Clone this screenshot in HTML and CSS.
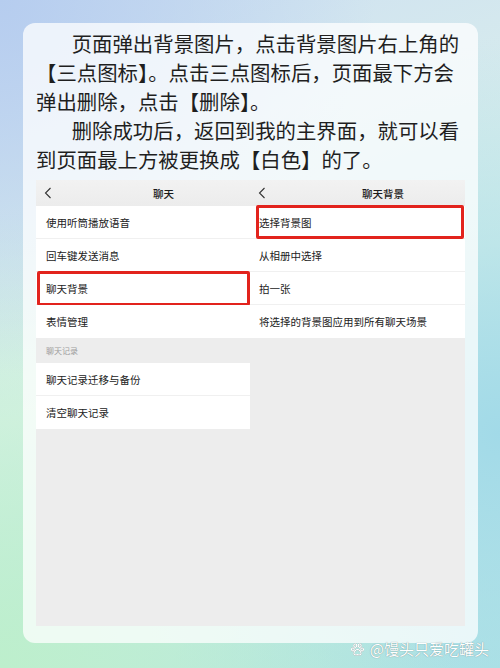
FILE: index.html
```html
<!DOCTYPE html>
<html lang="zh-CN">
<head>
  <meta charset="UTF-8" />
  <meta name="viewport" content="width=device-width, initial-scale=1" />
  <title>更换聊天背景</title>
  <link rel="stylesheet" href="styles.css">
</head>
<body>
  <div class="card">
    <div class="intro">
      <p>页面弹出背景图片，点击背景图片右上角的【三点图标】。点击三点图标后，页面最下方会弹出删除，点击【删除】。</p>
      <p>删除成功后，返回到我的主界面，就可以看到页面最上方被更换成【白色】的了。</p>
    </div>

    <div class="shot">
      <!-- left: chat settings -->
      <div class="panel left">
        <div class="nav">
          <svg class="back" width="8" height="12" viewBox="0 0 8 12"><path d="M6.5 1 1.5 6l5 5" fill="none" stroke="#333" stroke-width="1.1"/></svg>
          <span class="title">聊天</span>
        </div>
        <div class="row">使用听筒播放语音</div>
        <div class="row">回车键发送消息</div>
        <div class="row mark">聊天背景</div>
        <div class="row last">表情管理</div>
        <div class="group">聊天记录</div>
        <div class="row">聊天记录迁移与备份</div>
        <div class="row last">清空聊天记录</div>
      </div>

      <!-- right: chat background -->
      <div class="panel right">
        <div class="nav">
          <svg class="back" width="8" height="12" viewBox="0 0 8 12"><path d="M6.5 1 1.5 6l5 5" fill="none" stroke="#333" stroke-width="1.1"/></svg>
          <span class="title">聊天背景</span>
        </div>
        <div class="row mark">选择背景图</div>
        <div class="row">从相册中选择</div>
        <div class="row">拍一张</div>
        <div class="row last">将选择的背景图应用到所有聊天场景</div>
      </div>
    </div>
  </div>

  <div class="credit">
    <svg class="paw" width="13" height="13" viewBox="0 0 13 13">
      <g fill="none" stroke="#fff" stroke-width="1.3">
        <ellipse cx="4.3" cy="2.6" rx="1.5" ry="1.8"/>
        <ellipse cx="8.7" cy="2.6" rx="1.5" ry="1.8"/>
        <ellipse cx="1.9" cy="6.4" rx="1.3" ry="1.6"/>
        <ellipse cx="11.1" cy="6.4" rx="1.3" ry="1.6"/>
        <path d="M6.5 6.3c-1.6 0-3.6 2.6-3.6 4.3 0 1.4 1.6 1.6 3.6 1.1 2 .5 3.6.3 3.6-1.1 0-1.7-2-4.3-3.6-4.3z"/>
      </g>
    </svg>
    <span>@馒头只爱吃罐头</span>
  </div>
</body>
</html>
```

FILE: styles.css
```css
:root {
  --ink: #222;
  --row-line: #f0f0f0;
  --shot-bg: #ededed;
  --mark: #e2231d;
}
body {
  margin: 0; width: 500px; height: 668px; overflow: hidden;
  font-family: "Noto Sans CJK SC", "Noto Sans", sans-serif;
  color: var(--ink);
  background:
    radial-gradient(circle at 0% 0%, #b6cdef 0, rgba(182,205,239,0) 45%),
    radial-gradient(circle at 0% 100%, #bdefcc 0, rgba(189,239,204,0) 55%),
    radial-gradient(circle at 100% 65%, #a2dae8 0, rgba(162,218,232,0) 60%),
    linear-gradient(160deg, #cddff2, #dcf2ea 50%, #b0e4e4);
}
.card {
  margin: 23px 22px 0 23px; height: 620px;
  box-sizing: border-box; padding: 6px 13px 0;
  background: rgba(255,255,255,.74); border-radius: 12px;
}
.intro p {
  margin: 0; font-size: 20.4px; line-height: 29px;
  text-indent: 1.75em; color: #1f1f1f;
}
.shot {
  margin-top: 6px; height: 446px;
  display: flex; background: var(--shot-bg);
  font-size: 10.5px;
}
.panel { position: relative; }
.panel.left { width: 214px; }
.panel.right { flex: 1; }
.nav {
  height: 26px; display: flex; align-items: center;
  background: linear-gradient(#f2f2f2, #ececec);
}
.nav .back { margin-left: 8px; }
.left .nav .title { margin-left: 101px; }
.right .nav .title { margin-left: 96px; }
.nav .title { font-weight: 500; color: #1a1a1a; }
.row {
  height: 33px; box-sizing: border-box;
  display: flex; align-items: center;
  padding-left: 10px; background: #fff;
  border-bottom: 1px solid var(--row-line);
  position: relative;
}
.row.last { border-bottom: none; }
.right .row { padding-left: 9px; }
.group {
  height: 25px; display: flex; align-items: center;
  padding-left: 10px; font-size: 8px; color: #9c9c9c;
}
.row.mark::after {
  content: ""; position: absolute;
  border: 3px solid var(--mark); border-radius: 2px;
}
.left .row.mark::after { left: 1px; right: 0; top: -1px; bottom: -2px; }
.right .row.mark::after { left: 6px; right: 1px; top: -1px; bottom: -1px; }
.credit {
  display: flex; justify-content: flex-end; align-items: center; gap: 6px;
  margin-top: -2px; padding-right: 11px; height: 16px;
  font-size: 15px; line-height: 16px; color: #fff;
  text-shadow: 0 0 1px rgba(0,0,0,.45);
}
.credit .paw { filter: drop-shadow(0 0 .6px rgba(0,0,0,.5)); }
```
